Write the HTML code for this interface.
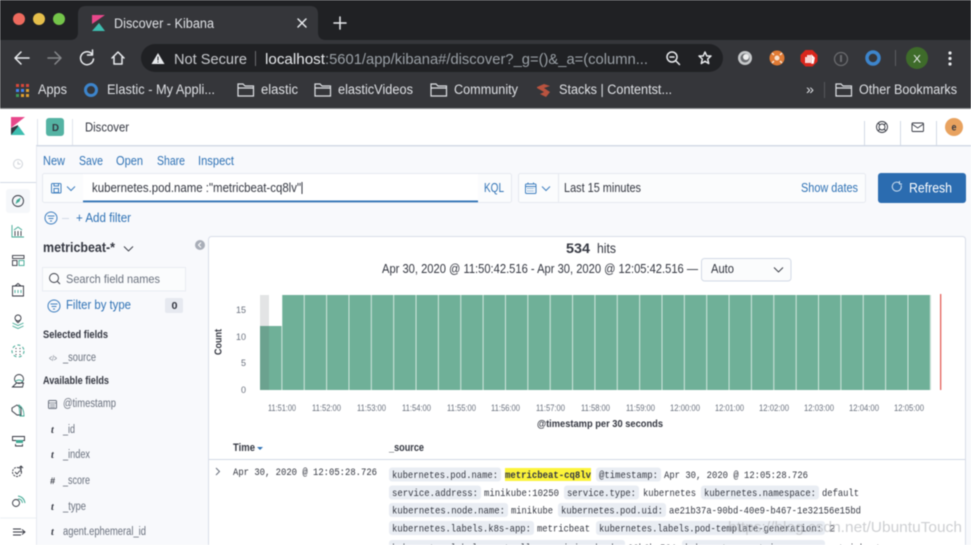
<!DOCTYPE html>
<html><head><meta charset="utf-8"><title>Discover - Kibana</title>
<style>
html,body{margin:0;padding:0;width:971px;height:545px;overflow:hidden;background:#fff}
svg{display:block;filter:blur(.45px)}
text{font-family:"Liberation Sans",sans-serif;font-size:12.5px;fill:#343741;white-space:pre}
.c{fill:#dfe1e5;font-size:13.5px}
.w{fill:#e8eaed;font-size:15px}
.l{fill:#2f72b5}
.g{fill:#69707d;font-size:11.5px}
.b{font-weight:bold;font-size:11px;fill:#343741}
.m{font-family:"Liberation Mono",monospace;font-size:10.5px;fill:#343741}
.a{font-size:9px;fill:#69707d}
.n{fill:none;stroke:#343741;stroke-width:.9}
.t{fill:none;stroke:#3fa893;stroke-width:.9}
.e{fill:none;stroke:#e8eaed;stroke-width:1.5;stroke-linecap:round;stroke-linejoin:round}
.f{fill:none;stroke:#dfe1e5;stroke-width:1.2}
.u{fill:none;stroke:#3f7fbf;stroke-width:1}
.p{fill:#e9edf3}
</style></head><body>
<svg width="971" height="545" viewBox="0 0 971 545" xmlns="http://www.w3.org/2000/svg">
<defs><pattern id="bars" x="260" y="0" width="22.36" height="545" patternUnits="userSpaceOnUse"><rect x="0" y="0" width="21.4" height="545" fill="#6fb098"/></pattern></defs>
<!-- browser chrome -->
<rect width="971" height="40" fill="#202124"/>
<rect y="40" width="971" height="68" fill="#35363a"/>
<rect y="108" width="971" height="1" fill="#8a8b8e"/>
<path d="M70 40q8 0 8-8V14q0-8 8-8h224q8 0 8 8v18q0 8 8 8z" fill="#35363a"/>
<circle cx="19" cy="19" r="6" fill="#ed6a5e"/><circle cx="39" cy="19" r="6" fill="#e5bf4b"/><circle cx="59" cy="19" r="6" fill="#74c54a"/>
<path d="M92 15h13l-13 9z" fill="#e8488b"/><path d="M105 15l-7 8 7 8z" fill="#35363a"/><path d="M92 31l7-8 6 8z" fill="#3ebeb0"/>
<text x="114" y="28" class="c" textLength="100" lengthAdjust="spacingAndGlyphs">Discover - Kibana</text>
<path d="M298 19l8 8M306 19l-8 8" class="e"/>
<path d="M340 17v12M334 23h12" class="e"/>
<path d="M29 58H16M21 52l-6 6 6 6" class="e"/>
<path d="M61 58H48M55 52l6 6-6 6" class="e" style="stroke:#85878a"/>
<path d="M92 54a6.500 6.500 0 1 0 1.500 5M92.500 50v5h-5" class="e"/>
<path d="M112 58l6-6 6 6M114 57v7h8v-7" class="e"/>
<rect x="141" y="44" width="582" height="28" rx="14" fill="#202124"/>
<path d="M158 53l6.500 11h-13z" fill="#e8eaed"/><rect x="157.500" y="56.500" width="1" height="4" fill="#202124"/><rect x="157.500" y="61.500" width="1" height="1" fill="#202124"/>
<text x="174" y="64" class="w" textLength="73" lengthAdjust="spacingAndGlyphs" style="fill:#c9cbcf">Not Secure</text>
<rect x="255" y="51" width="1" height="15" fill="#6b6c70"/>
<text x="265" y="64" class="w" textLength="60" lengthAdjust="spacingAndGlyphs">localhost</text>
<text x="325" y="64" class="w" textLength="323" lengthAdjust="spacingAndGlyphs" style="fill:#9aa0a6">:5601/app/kibana#/discover?_g=()&amp;_a=(column...</text>
<circle cx="672" cy="57" r="5" class="e"/><path d="M676 61l3.500 3.500M670 57h4" class="e"/>
<path d="M705 52l1.800 4h4.200l-3.300 3 1 4.500-3.700-2.300-3.700 2.300 1-4.500-3.300-3h4.200z" class="e"/>
<circle cx="745" cy="58" r="7" fill="#c6c8ca"/><circle cx="745" cy="58" r="4.500" fill="#6a6c70"/><circle cx="746" cy="57" r="3" fill="#eee"/>
<circle cx="777" cy="58" r="7.500" fill="#e07a34"/><circle cx="777" cy="58" r="2.500" fill="#f8e2d0"/><path d="M772 53l2 2M782 53l-2 2M772 63l2-2M782 63l-2-2" stroke="#f8e2d0" stroke-width="1.500"/>
<path d="M805.500 50h7l5 5v6.500l-5 5h-7l-5-5V55z" fill="#d9261c"/><path d="M806 63v-6m2 6v-8m2 8v-8m2 8v-7l2 2-1 5z" stroke="#fff" stroke-width="1.600" fill="none"/>
<circle cx="841" cy="59" r="6.500" fill="none" stroke="#6a6b6e" stroke-width="1.300"/><rect x="840" y="55" width="2" height="7" fill="#6a6b6e"/>
<circle cx="873" cy="58" r="6" fill="none" stroke="#3d85cc" stroke-width="3.500"/>
<rect x="895" y="50" width="1" height="16" fill="#5c5d61"/>
<circle cx="917" cy="58" r="11" fill="#3e6b2a"/><text x="913" y="62.500" style="fill:#e8eaed;font-size:11px" textLength="8" lengthAdjust="spacingAndGlyphs">X</text>
<circle cx="950" cy="53" r="1.600" fill="#e8eaed"/><circle cx="950" cy="58.500" r="1.600" fill="#e8eaed"/><circle cx="950" cy="64" r="1.600" fill="#e8eaed"/>
<!-- bookmarks -->
<g><rect x="16" y="84" width="3" height="3" fill="#d9483b"/><rect x="21" y="84" width="3" height="3" fill="#d9483b"/><rect x="26" y="84" width="3" height="3" fill="#d9483b"/><rect x="16" y="89" width="3" height="3" fill="#4285f4"/><rect x="21" y="89" width="3" height="3" fill="#4285f4"/><rect x="26" y="89" width="3" height="3" fill="#e0a030"/><rect x="16" y="94" width="3" height="3" fill="#3c9a56"/><rect x="21" y="94" width="3" height="3" fill="#e0a030"/><rect x="26" y="94" width="3" height="3" fill="#e0a030"/></g>
<text x="38" y="94" class="c" textLength="29" lengthAdjust="spacingAndGlyphs">Apps</text>
<circle cx="91" cy="90" r="5.500" fill="none" stroke="#3d85cc" stroke-width="3"/>
<text x="107" y="94" class="c" textLength="108" lengthAdjust="spacingAndGlyphs">Elastic - My Appli...</text>
<path d="M238 84h5l2 2h8.500v10H238zM238 88h15.500" class="f"/>
<text x="261" y="94" class="c" textLength="37" lengthAdjust="spacingAndGlyphs">elastic</text>
<path d="M315 84h5l2 2h8.500v10H315zM315 88h15.500" class="f"/>
<text x="338" y="94" class="c" textLength="75" lengthAdjust="spacingAndGlyphs">elasticVideos</text>
<path d="M431 84h5l2 2h8.500v10H431zM431 88h15.500" class="f"/>
<text x="454" y="94" class="c" textLength="64" lengthAdjust="spacingAndGlyphs">Community</text>
<path d="M537 87l7-3 6 2-6 2 6 4-4 5-6-3 4-2-7-4z" fill="#b9533f"/>
<text x="559" y="94" class="c" textLength="113" lengthAdjust="spacingAndGlyphs">Stacks | Contentst...</text>
<text x="806" y="94" class="c" textLength="8" lengthAdjust="spacingAndGlyphs">»</text>
<rect x="824" y="82" width="1" height="16" fill="#55565a"/>
<path d="M836 84h5l2 2h8.500v10H836zM836 88h15.500" class="f"/>
<text x="859" y="94" class="c" textLength="98" lengthAdjust="spacingAndGlyphs">Other Bookmarks</text>

<!-- page -->
<rect y="109" width="971" height="436" fill="#f8f9fc"/>
<rect y="109" width="971" height="36" fill="#fff"/>
<rect y="145" width="971" height="1.500" fill="#d3dae6"/>
<rect y="109" width="36" height="436" fill="#fff"/>
<rect x="36" y="146" width="1" height="399" fill="#e6e9f0"/>
<!-- logo -->
<path d="M11 117h14l-14 11z" fill="#e8488b"/><path d="M11 128l7-3v10h-7z" fill="#343741"/><path d="M11 135l7.500-9 6.500 9z" fill="#3ebeb0"/>
<rect x="37" y="119" width="1" height="26" fill="#e0e4ec"/><rect x="72" y="119" width="1" height="26" fill="#e0e4ec"/>
<rect x="46" y="118" width="18" height="18" rx="3" fill="#54b3a3"/>
<text x="52" y="131" style="font-size:10px;font-weight:bold" textLength="7" lengthAdjust="spacingAndGlyphs">D</text>
<text x="85" y="131.500" textLength="44" lengthAdjust="spacingAndGlyphs" style="font-size:12.500px">Discover</text>
<rect x="864" y="121" width="1" height="24" fill="#d3dae6"/><rect x="900" y="121" width="1" height="24" fill="#d3dae6"/><rect x="936" y="121" width="1" height="24" fill="#d3dae6"/>
<circle cx="882" cy="127" r="5.500" class="n"/><circle cx="882" cy="127" r="3" class="n"/><path d="M878 123l2 2M886 123l-2 2M878 131l2-2M886 131l-2-2" class="n"/>
<rect x="912" y="123" width="11.500" height="8.500" rx="1" class="n"/><path d="M912 124l5.700 4 5.700-4" class="n"/>
<circle cx="954" cy="127" r="9" fill="#e8a25f"/><text x="951.500" y="130.500" style="font-size:10.500px;font-weight:bold" textLength="5" lengthAdjust="spacingAndGlyphs">e</text>

<!-- left nav -->
<circle cx="18" cy="164" r="4.500" fill="none" stroke="#d0d4da"/><path d="M18 161.500V164h2.500" fill="none" stroke="#d0d4da"/>
<rect y="182" width="36" height="1" fill="#d3dae6"/>
<rect x="6" y="189" width="24" height="24" rx="3" fill="#f5f7fa"/>
<circle cx="18" cy="201" r="5.500" class="n"/><path d="M15.500 204l1.300-4 4-2.500-1.300 4z" fill="#3fa893"/>
<path d="M12 225v12h12M14 230l4-3 4 3" class="t"/><path d="M15 236v-5m3 5v-5m3 5v-5" class="n"/>
<rect x="12.500" y="255.500" width="11.500" height="3" class="n"/><rect x="12.500" y="260.500" width="4.500" height="5" class="n"/><rect x="19" y="260.500" width="5" height="5" class="t"/>
<path d="M12.500 286h11v10h-11zM15 286l3-2.500 3 2.500" class="n"/><path d="M15 293v-3m3 3v-3m3 3v-3" class="t"/>
<circle cx="18" cy="318" r="3" class="n"/><path d="M18 323l-2.500-3M18 323l2.500-3" class="n"/><path d="M12.500 323l5.500 2.500 5.500-2.500M12.500 326l5.500 2.500 5.500-2.500" class="t"/>
<circle cx="18" cy="351" r="6" fill="none" stroke="#3fa893" stroke-dasharray="3 2.500"/><path d="M15.500 348.500h1M19.500 348.500h1M15.500 351.500h1M19.500 351.500h1M15.500 354.500h1M19.500 354.500h1" class="n"/>
<circle cx="19" cy="379" r="4.500" class="n"/><path d="M12.500 387l4-4h7l-1 4z" class="n"/><path d="M15 381.500q4-3 8 0" class="t"/>
<path d="M12 408l5-3 4 3v7h-4l-5-4z" class="n"/><path d="M19 405q5 3 5 11h-4z" class="t"/>
<path d="M12.500 436.500h12v4h-12zM15.500 444v2h7v-2" class="n"/><rect x="16" y="440" width="7" height="3" fill="#3fa893"/>
<circle cx="17" cy="472" r="4.500" class="n" stroke-dasharray="2 1"/><path d="M15 472l2 2 3-3.500M21 472v-6m-2 2l2-2 2 2" class="n"/>
<circle cx="16" cy="503" r="3.500" class="n"/><path d="M18 496q6 1 7 7M18 499q4 0 4.500 4" class="t"/>
<rect y="518" width="36" height="27" fill="#fff"/><rect y="517.500" width="36" height="1" fill="#edf0f5"/>
<path d="M13 529h8M13 532h12M13 535h8M22 529.500l3 2.500-3 2.500" class="n"/>

<!-- top nav links -->
<text x="43" y="165" class="l" textLength="22" lengthAdjust="spacingAndGlyphs">New</text>
<text x="79" y="165" class="l" textLength="24" lengthAdjust="spacingAndGlyphs">Save</text>
<text x="116" y="165" class="l" textLength="27" lengthAdjust="spacingAndGlyphs">Open</text>
<text x="157" y="165" class="l" textLength="28" lengthAdjust="spacingAndGlyphs">Share</text>
<text x="198" y="165" class="l" textLength="36" lengthAdjust="spacingAndGlyphs">Inspect</text>

<!-- query bar -->
<rect x="42.500" y="173.500" width="469" height="29" rx="2" fill="#fbfcfd" stroke="#e6e9f0"/>
<rect x="83" y="174" width="395" height="28" fill="#fff"/>
<rect x="83" y="200.500" width="395" height="1.800" fill="#2f72b5"/>
<rect x="51.500" y="183.500" width="9.500" height="9.500" rx="1" class="u"/><rect x="54" y="183.500" width="4.500" height="2.500" class="u"/><rect x="54" y="188.500" width="4.500" height="4" class="u"/>
<path d="M67 186.500l4 4 4-4" class="u"/>
<text x="92" y="192" textLength="209" lengthAdjust="spacingAndGlyphs">kubernetes.pod.name :"metricbeat-cq8lv"</text>
<rect x="301.500" y="182" width="1" height="12" fill="#343741"/>
<text x="484" y="192" class="l" textLength="20" lengthAdjust="spacingAndGlyphs">KQL</text>
<rect x="518.500" y="173.500" width="347" height="29" rx="2" fill="#fbfcfd" stroke="#e6e9f0"/>
<rect x="558" y="174" width="1" height="28" fill="#e6e9f0"/>
<rect x="525.500" y="184" width="10.500" height="9.500" rx="1" class="u"/><path d="M525.500 186.500h10.500M528 182.500v2M533.500 182.500v2" class="u"/><path d="M527.500 188.500h6.500M527.500 191h6.500" class="u" stroke-dasharray="1 1"/>
<path d="M542 186.500l4 4 4-4" class="u"/>
<text x="564" y="192" textLength="77" lengthAdjust="spacingAndGlyphs">Last 15 minutes</text>
<text x="801" y="192" class="l" textLength="57" lengthAdjust="spacingAndGlyphs">Show dates</text>
<rect x="878" y="173" width="88" height="30" rx="3" fill="#2b6cb0"/>
<path d="M901 185a4.500 4.500 0 1 1-1.500-2M899.500 181v3h2.500" fill="none" stroke="#cfe0f0"/>
<text x="909" y="192.500" style="fill:#fff;font-size:14px" textLength="43" lengthAdjust="spacingAndGlyphs">Refresh</text>

<!-- filter row -->
<circle cx="51" cy="218" r="6" class="u"/><path d="M47.500 216h7M48.500 218.500h5M50 221h2" class="u"/>
<rect x="62" y="218" width="7" height="1" fill="#d3dae6"/>
<text x="76" y="222" class="l" textLength="55" lengthAdjust="spacingAndGlyphs">+ Add filter</text>

<!-- sidebar -->
<text x="43" y="252" style="font-size:13.500px;font-weight:bold" textLength="72" lengthAdjust="spacingAndGlyphs">metricbeat-*</text>
<path d="M124 246.500l4.500 4.500 4.500-4.500" class="n"/>
<circle cx="200" cy="245" r="5" fill="#a9aeb8"/><path d="M201 242.500l-2.500 2.500 2.500 2.500" fill="none" stroke="#fff"/>
<rect x="42.500" y="267.500" width="143" height="23.500" fill="#fbfcfd" stroke="#e9ecf2"/>
<circle cx="54" cy="278" r="4.500" class="n"/><path d="M57.500 281.500l2.500 2.500" class="n"/>
<text x="66" y="283" style="fill:#69707d;font-size:12px" textLength="94" lengthAdjust="spacingAndGlyphs">Search field names</text>
<circle cx="54" cy="306" r="6" class="u"/><path d="M50.500 304h7M51.500 306.500h5M53 309h2" class="u"/>
<text x="66" y="309" class="l" textLength="65" lengthAdjust="spacingAndGlyphs">Filter by type</text>
<rect x="165" y="298" width="18" height="15" rx="2" fill="#e6e9f0"/>
<text x="171.500" y="309" style="font-size:10px;font-weight:bold" textLength="6" lengthAdjust="spacingAndGlyphs">0</text>
<text x="43" y="338" class="b" textLength="65" lengthAdjust="spacingAndGlyphs">Selected fields</text>
<text x="49" y="361" style="font-size:8px;fill:#69707d" textLength="8" lengthAdjust="spacingAndGlyphs">&lt;/&gt;</text>
<text x="63" y="361" class="g" textLength="33" lengthAdjust="spacingAndGlyphs">_source</text>
<text x="43" y="384" class="b" textLength="66" lengthAdjust="spacingAndGlyphs">Available fields</text>
<rect x="48.500" y="400.500" width="8" height="8" rx="1" fill="none" stroke="#69707d"/><path d="M48.500 403h8M50 405h5M50 407h5" stroke="#69707d" fill="none" stroke-width=".8"/>
<text x="63" y="407" class="g" textLength="53" lengthAdjust="spacingAndGlyphs">@timestamp</text>
<text x="51" y="433" style="font-size:10px;font-weight:bold;font-style:italic;font-family:'Liberation Serif',serif">t</text>
<text x="63" y="433" class="g" textLength="12" lengthAdjust="spacingAndGlyphs">_id</text>
<text x="51" y="458" style="font-size:10px;font-weight:bold;font-style:italic;font-family:'Liberation Serif',serif">t</text>
<text x="63" y="458" class="g" textLength="27" lengthAdjust="spacingAndGlyphs">_index</text>
<text x="50" y="484" style="font-size:9px;font-weight:bold;font-style:italic">#</text>
<text x="63" y="484" class="g" textLength="27" lengthAdjust="spacingAndGlyphs">_score</text>
<text x="51" y="510" style="font-size:10px;font-weight:bold;font-style:italic;font-family:'Liberation Serif',serif">t</text>
<text x="63" y="510" class="g" textLength="23" lengthAdjust="spacingAndGlyphs">_type</text>
<text x="51" y="535" style="font-size:10px;font-weight:bold;font-style:italic;font-family:'Liberation Serif',serif">t</text>
<text x="63" y="535" class="g" textLength="83" lengthAdjust="spacingAndGlyphs">agent.ephemeral_id</text>

<!-- main panel -->
<rect x="208.500" y="236.500" width="757" height="320" rx="3" fill="#fff" stroke="#d8dde8"/>
<text x="566" y="253" style="font-size:13.500px;font-weight:bold" textLength="24" lengthAdjust="spacingAndGlyphs">534</text>
<text x="597" y="253" style="font-size:13.500px" textLength="19" lengthAdjust="spacingAndGlyphs">hits</text>
<text x="382" y="273" textLength="316" lengthAdjust="spacingAndGlyphs">Apr 30, 2020 @ 11:50:42.516 - Apr 30, 2020 @ 12:05:42.516 —</text>
<rect x="701.500" y="258.500" width="89.500" height="22.500" rx="3" fill="#fbfcfd" stroke="#d3dae6"/>
<text x="711" y="273" textLength="23" lengthAdjust="spacingAndGlyphs">Auto</text>
<path d="M774 267.500l4.500 4.500 4.500-4.500" class="n"/>

<!-- chart -->
<rect x="260" y="295" width="670.800" height="95" fill="#d5e8e0"/>
<rect x="260" y="295" width="670.800" height="95" fill="url(#bars)"/>
<rect x="260" y="294" width="22" height="32" fill="#fff"/>
<rect x="260" y="295" width="9" height="95" fill="#595c66" opacity=".17"/>
<rect x="940" y="294" width="1.300" height="96" fill="#e4605a"/>
<text class="a" x="236" y="313">15</text><text class="a" x="236" y="340">10</text><text class="a" x="241" y="366">5</text><text class="a" x="241" y="393">0</text>
<text transform="translate(221.500 355) rotate(-90)" class="b" style="font-size:10.500px" textLength="26" lengthAdjust="spacingAndGlyphs">Count</text>
<text class="a" x="268" y="411" textLength="28" lengthAdjust="spacingAndGlyphs">11:51:00</text>
<text class="a" x="312" y="411" textLength="29" lengthAdjust="spacingAndGlyphs">11:52:00</text>
<text class="a" x="357" y="411" textLength="29" lengthAdjust="spacingAndGlyphs">11:53:00</text>
<text class="a" x="402" y="411" textLength="29" lengthAdjust="spacingAndGlyphs">11:54:00</text>
<text class="a" x="447" y="411" textLength="29" lengthAdjust="spacingAndGlyphs">11:55:00</text>
<text class="a" x="491" y="411" textLength="29" lengthAdjust="spacingAndGlyphs">11:56:00</text>
<text class="a" x="536" y="411" textLength="29" lengthAdjust="spacingAndGlyphs">11:57:00</text>
<text class="a" x="581" y="411" textLength="29" lengthAdjust="spacingAndGlyphs">11:58:00</text>
<text class="a" x="626" y="411" textLength="29" lengthAdjust="spacingAndGlyphs">11:59:00</text>
<text class="a" x="670" y="411" textLength="30" lengthAdjust="spacingAndGlyphs">12:00:00</text>
<text class="a" x="715" y="411" textLength="29" lengthAdjust="spacingAndGlyphs">12:01:00</text>
<text class="a" x="759" y="411" textLength="30" lengthAdjust="spacingAndGlyphs">12:02:00</text>
<text class="a" x="804" y="411" textLength="30" lengthAdjust="spacingAndGlyphs">12:03:00</text>
<text class="a" x="849" y="411" textLength="30" lengthAdjust="spacingAndGlyphs">12:04:00</text>
<text class="a" x="894" y="411" textLength="30" lengthAdjust="spacingAndGlyphs">12:05:00</text>
<text x="537" y="427" class="b" style="font-size:10.500px" textLength="126" lengthAdjust="spacingAndGlyphs">@timestamp per 30 seconds</text>

<!-- table -->
<text x="233" y="451" class="b" textLength="22" lengthAdjust="spacingAndGlyphs">Time</text>
<path d="M257 447h6l-3 3z" fill="#2f72b5"/>
<text x="389" y="451" class="b" textLength="35" lengthAdjust="spacingAndGlyphs">_source</text>
<rect x="209" y="459" width="756" height="1" fill="#d3dae6"/>
<path d="M216 468l3.500 3.500-3.500 3.500" fill="none" stroke="#69707d"/>
<text x="233" y="475" class="m" textLength="144" lengthAdjust="spacingAndGlyphs">Apr 30, 2020 @ 12:05:28.726</text>

<rect class="p" x="389" y="467.500" width="112" height="14" rx="3"/>
<rect x="505" y="468" width="86" height="13" fill="#fcf33a"/>
<rect class="p" x="596" y="467.500" width="65" height="14" rx="3"/>
<rect class="p" x="389" y="485.500" width="92" height="14" rx="3"/>
<rect class="p" x="564" y="485.500" width="75" height="14" rx="3"/>
<rect class="p" x="701" y="485.500" width="118" height="14" rx="3"/>
<rect class="p" x="389" y="503" width="119" height="14" rx="3"/>
<rect class="p" x="558" y="503" width="108" height="14" rx="3"/>
<rect class="p" x="389" y="521" width="145" height="14" rx="3"/>
<rect class="p" x="596" y="521" width="229" height="14" rx="3"/>
<rect class="p" x="389" y="540" width="236" height="14" rx="3"/>
<rect class="p" x="682" y="540" width="143" height="14" rx="3"/>

<text class="m" x="392" y="478" textLength="106" lengthAdjust="spacingAndGlyphs">kubernetes.pod.name:</text>
<text class="m" x="505" y="478" textLength="86" lengthAdjust="spacingAndGlyphs" style="font-weight:bold">metricbeat-cq8lv</text>
<text class="m" x="599" y="478" textLength="59" lengthAdjust="spacingAndGlyphs">@timestamp:</text>
<text class="m" x="664" y="478" textLength="144" lengthAdjust="spacingAndGlyphs">Apr 30, 2020 @ 12:05:28.726</text>

<text class="m" x="392" y="496" textLength="86" lengthAdjust="spacingAndGlyphs">service.address:</text>
<text class="m" x="484" y="496" textLength="75" lengthAdjust="spacingAndGlyphs">minikube:10250</text>
<text class="m" x="567" y="496" textLength="69" lengthAdjust="spacingAndGlyphs">service.type:</text>
<text class="m" x="643" y="496" textLength="53" lengthAdjust="spacingAndGlyphs">kubernetes</text>
<text class="m" x="704" y="496" textLength="112" lengthAdjust="spacingAndGlyphs">kubernetes.namespace:</text>
<text class="m" x="822" y="496" textLength="37" lengthAdjust="spacingAndGlyphs">default</text>

<text class="m" x="392" y="513.500" textLength="113" lengthAdjust="spacingAndGlyphs">kubernetes.node.name:</text>
<text class="m" x="511" y="513.500" textLength="42" lengthAdjust="spacingAndGlyphs">minikube</text>
<text class="m" x="561" y="513.500" textLength="102" lengthAdjust="spacingAndGlyphs">kubernetes.pod.uid:</text>
<text class="m" x="669" y="513.500" textLength="192" lengthAdjust="spacingAndGlyphs">ae21b37a-90bd-40e9-b467-1e32156e15bd</text>

<text class="m" x="392" y="531.500" textLength="139" lengthAdjust="spacingAndGlyphs">kubernetes.labels.k8s-app:</text>
<text class="m" x="537" y="531.500" textLength="53" lengthAdjust="spacingAndGlyphs">metricbeat</text>
<text class="m" x="599" y="531.500" textLength="223" lengthAdjust="spacingAndGlyphs">kubernetes.labels.pod-template-generation:</text>
<text class="m" x="829" y="531.500">2</text>

<text class="m" x="392" y="551" textLength="230" lengthAdjust="spacingAndGlyphs">kubernetes.labels.controller-revision-hash:</text>
<text class="m" x="628" y="551" textLength="48" lengthAdjust="spacingAndGlyphs">98b6b-564</text>
<text class="m" x="685" y="551" textLength="137" lengthAdjust="spacingAndGlyphs">kubernetes.container.name:</text>
<text class="m" x="828" y="551" textLength="53" lengthAdjust="spacingAndGlyphs">metricbeat</text>

<!-- watermark -->
<text x="728" y="532" style="font-size:15px;fill:#b9bbbf;opacity:.7" textLength="234" lengthAdjust="spacingAndGlyphs">https://blog.csdn.net/UbuntuTouch</text>
</svg>
</body></html>
